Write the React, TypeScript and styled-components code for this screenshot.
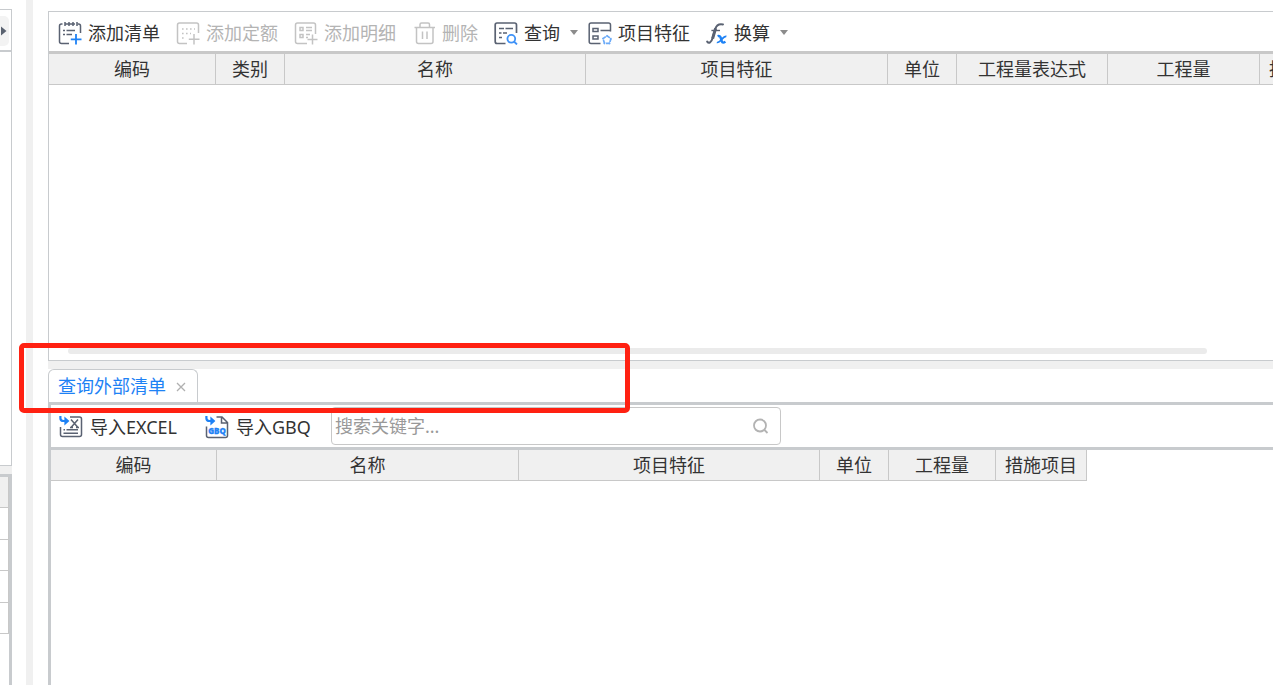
import React from "react";
import styled, { createGlobalStyle, css } from "styled-components";

const line = "#c8cbce";
const soft = "#c8c8c8";
const ink = "#5a6272";
const blue = "#1e82f5";
const muted = "#c3c3c3";

const GlobalStyle = createGlobalStyle`
  *, *::before, *::after { box-sizing: border-box; }
  body {
    margin: 0;
    background: #fff;
    color: #333;
    font-family: "Noto Sans", "Noto Sans CJK SC", sans-serif;
    font-size: 18px;
    line-height: 24px;
  }
  button, input { font: inherit; color: inherit; }
`;

const Page = styled.div`
  display: flex;
  min-height: 100vh;
  overflow: hidden;
`;

/* Left side panel */
const SidePane = styled.aside`
  flex: 0 0 12px;
  display: flex;
  flex-direction: column;
  padding-top: 9px;
`;

const SideTop = styled.section`
  height: 457px;
  border: solid ${line};
  border-width: 1px 1px 1px 0;
`;

const SideTabs = styled.div`
  height: 42px;
  padding-top: 6px;
  border-bottom: 2px solid ${line};
`;

const ScrollButton = styled.button`
  display: flex;
  align-items: center;
  width: 9px;
  height: 30px;
  padding: 0;
  border: 0;
  border-radius: 0 5px 5px 0;
  background: #f3f3f3;
`;

const SideGap = styled.div`
  height: 8px;
  background: #f0f0f0;
`;

const SideBottom = styled.section`
  flex: 1;
  border: solid ${line};
  border-width: 3px 3px 0 0;
`;

const SideRow = styled.div<{ $head?: boolean }>`
  height: 31px;
  border: solid ${soft};
  border-width: 0 1px 1px 0;
  background: ${(p) => (p.$head ? "#f0f0f0" : "transparent")};
  &:nth-child(even) { height: 32px; }
`;

const Splitter = styled.div`
  flex: 0 0 7px;
  margin: 0 15px 0 14px;
  background: #f0f0f0;
`;

/* Main area */
const Main = styled.main`
  flex: 1;
  min-width: 0;
  display: flex;
  flex-direction: column;
  padding-top: 11px;
`;

const UpperPane = styled.section`
  display: flex;
  flex-direction: column;
  height: 350px;
  border: solid ${line};
  border-width: 1px 0 1px 1px;
`;

const Toolbar = styled.div`
  display: flex;
  align-items: center;
  flex: 0 0 42px;
  padding: 0 0 0 9px;
  border-bottom: 3px solid ${soft};
`;

const Tool = styled.button<{ $menu?: boolean }>`
  display: flex;
  align-items: center;
  gap: 6px;
  flex: none;
  margin: 2px ${(p) => (p.$menu ? "10px" : "16px")} 0 0;
  padding: 0;
  border: 0;
  background: none;
  white-space: nowrap;
  &:disabled { color: #b4b4b4; }
  svg { flex: none; }
`;

const Caret = styled.span`
  width: 8px;
  margin-left: 4px;
  border: solid transparent;
  border-width: 5px 4px 0;
  border-top-color: #8c8c8c;
`;

const GridArea = styled.div`
  flex: 1;
  overflow: hidden;
`;

const Grid = styled.table<{ $width: number }>`
  width: ${(p) => p.$width}px;
  table-layout: fixed;
  border-spacing: 0;
`;

const HeadCell = styled.th<{ $width: number }>`
  width: ${(p) => p.$width}px;
  height: 31px;
  padding: 0;
  border: solid ${soft};
  border-width: 0 1px 1px 0;
  background: #f0f0f0;
  font-weight: 400;
  text-align: center;
  white-space: nowrap;
`;

const ScrollTrack = styled.div`
  padding: 0 66px 6px 19px;
`;

const ScrollThumb = styled.div`
  height: 6px;
  border-radius: 3px;
  background: #ebebeb;
`;

const Gap = styled.div`
  height: 8px;
  background: #f0f0f0;
`;

const TabBar = styled.div`
  position: relative;
  display: flex;
  height: 36px;
  border-bottom: 3px solid ${line};
`;

const Tab = styled.div`
  display: flex;
  align-items: center;
  gap: 10px;
  padding: 0 11px 0 9px;
  border: 1px solid ${line};
  border-bottom: 0;
  border-radius: 6px 6px 0 0;
`;

const plain = css`
  padding: 0;
  border: 0;
  background: none;
`;

const TabLabel = styled.button`
  ${plain}
  color: ${blue};
`;

const TabClose = styled.button`
  ${plain}
  display: flex;
  padding-top: 2px;
`;

const Highlight = styled.div`
  position: absolute;
  z-index: 2;
  left: -29px;
  top: -26px;
  width: 611px;
  height: 70px;
  border: 5px solid #ff2112;
  border-radius: 5px;
  pointer-events: none;
`;

const LowerPane = styled.section`
  flex: 1;
  display: flex;
  flex-direction: column;
  border-left: 3px solid ${line};
`;

const ImportBar = styled.div`
  display: flex;
  align-items: center;
  flex: 0 0 45px;
  padding-left: 8px;
  border-bottom: 3px solid ${line};
`;

const ImportTool = styled(Tool)`
  gap: 7px;
  margin: 2px 28px 0 0;
  & + & { margin-right: 20px; }
`;

const SearchBox = styled.label`
  display: flex;
  align-items: center;
  flex: 0 1 450px;
  height: 38px;
  padding: 0 10px 0 3px;
  border: 1px solid ${soft};
  border-radius: 4px;
`;

const SearchInput = styled.input`
  flex: 1;
  min-width: 0;
  padding: 0;
  border: 0;
  outline: 0;
  background: none;
  &::placeholder { color: #999; opacity: 1; }
`;

const Glyph = ({ width = 24, children }: { width?: number; children: React.ReactNode }) => (
  <svg width={width} height="24" viewBox={`0 0 ${width} 24`} fill="none" strokeWidth="1.5" aria-hidden="true">
    {children}
  </svg>
);

const AddListIcon = () => (
  <Glyph>
    <path d="M4.5 3H3.5Q1.5 3 1.5 5V20.5Q1.5 22.5 3.5 22.5H11M19.5 3H20.5Q22.5 3 22.5 5V12" stroke={ink} />
    <path d="M7 1V5M11 1V5M15 1V5M19 1V5M7 3H17" stroke={ink} />
    <path d="M5 9.5H7M8.5 9.5H17M5 13.5H7M8.5 13.5H14" stroke={ink} />
    <path d="M18 13V23.5M12.8 18.3H23.5" stroke={blue} strokeWidth="1.8" />
  </Glyph>
);

const AddQuotaIcon = () => (
  <Glyph>
    <path d="M11 22.5H3.5Q1.5 22.5 1.5 20.5V4Q1.5 2 3.5 2H20.5Q22.5 2 22.5 4V12" stroke={muted} />
    <path d="M6 8H19M6 12.5H15M6 17H10" stroke={muted} strokeDasharray="1.6 2.4" />
    <path d="M18 13V23.5M12.8 18.3H23.5" stroke={muted} />
  </Glyph>
);

const AddDetailIcon = () => (
  <Glyph>
    <path d="M13 22.5H3.5Q1.5 22.5 1.5 20.5V4Q1.5 2 3.5 2H19.5Q21.5 2 21.5 4V13" stroke={muted} />
    <path d="M6 6.5H9V9.5H6ZM6 13.5H9V16.5H6ZM12 6.5H18M12 9.5H18M12 13.5H16M12 16.5H14" stroke={muted} />
    <path d="M18.5 13.5V23.5M13.5 18.5H23.5" stroke={muted} />
  </Glyph>
);

const TrashIcon = () => (
  <Glyph>
    <path d="M2.5 6.5H23M8 6V3.5Q8 2 9.5 2H16Q17.5 2 17.5 3.5V6M4.5 6.5V20.5Q4.5 22.5 6.5 22.5H19Q21 22.5 21 20.5V6.5M10.5 10.5V18M15 10.5V18" stroke={muted} />
  </Glyph>
);

const QueryIcon = () => (
  <Glyph>
    <path d="M11.5 22.5H3Q1.2 22.5 1.2 20.5V4Q1.2 2 3 2H20.5Q22.5 2 22.5 4V12" stroke={ink} strokeWidth="1.7" />
    <path d="M5 7.5H10M11.5 7.5H19M5 12H7.5M9 12H13M5 16.5H8" stroke={ink} />
    <circle cx="17.3" cy="17.8" r="3.9" stroke="#3f92f7" strokeWidth="1.8" />
    <path d="M20 20.5L23 23.5" stroke="#3f92f7" strokeWidth="1.8" />
  </Glyph>
);

const FeatureIcon = () => (
  <Glyph>
    <path d="M12.5 22.5H3Q1.2 22.5 1.2 20.5V4Q1.2 2 3 2H20.5Q22.5 2 22.5 4V10.5" stroke={ink} />
    <path d="M5 7.5H10V10.5H5ZM5 15H10V18H5ZM12.5 9.5H22.5" stroke={ink} />
    <path d="M19 14.8L23 17.6L21.5 22.3H16.5L15 17.6Z" stroke="#6cabf8" strokeWidth="1.7" strokeDasharray="3.6 1.3" />
    <path d="M19 14V16M23.6 17.5L22 18M22 23L21 21.5M16 23L17 21.5M14.4 17.5L16 18" stroke="#6cabf8" strokeWidth="1.4" />
  </Glyph>
);

const FormulaIcon = () => (
  <Glyph width={22}>
    <path d="M1.2 20.6C2.8 23 5.4 21.6 6.6 17L9.4 7.6C10.6 3.8 13.2 2.6 17 3.4" stroke={ink} strokeWidth="2" strokeLinecap="round" />
    <path d="M6.6 17.6L9.6 7.4" stroke={ink} strokeWidth="3" />
    <path d="M5.4 9.5H14" stroke={ink} strokeWidth="1.4" />
    <path d="M11.6 15.2Q14.2 14.2 14.8 17.2L15.8 20.4Q16.6 22.8 19.4 20.6" stroke={blue} strokeWidth="2.4" />
    <path d="M20.4 15.4C17 14.6 14.2 22.4 10.8 21.4" stroke={blue} strokeWidth="1.6" />
  </Glyph>
);

const ImportArrow = () => (
  <>
    <path d="M1.4 1V3.2Q1.4 6 4.6 6H7" stroke={blue} strokeWidth="2.2" />
    <path d="M5.4 1.6L10.4 6L5.4 10.4Z" fill={blue} />
  </>
);

const ExcelIcon = () => (
  <Glyph>
    <ImportArrow />
    <path d="M11 2H20.5Q22.5 2 22.5 4V19.5Q22.5 21.5 20.5 21.5H3.5Q1.5 21.5 1.5 19.5V12" stroke={ink} />
    <path d="M12 4.5L19 12.5M19 4.5L12 12.5M11 12.5H14M17 12.5H20" stroke={ink} />
    <path d="M4.5 14.8H6M7.5 14.8H19M4.5 18.3H19" stroke={ink} />
  </Glyph>
);

const GbqIcon = () => (
  <Glyph>
    <ImportArrow />
    <path d="M11.5 2H17L22.5 7.5V20.5Q22.5 22.5 20.5 22.5H3.5Q1.5 22.5 1.5 20.5V11.5M16.5 2V8H22.5" stroke={ink} />
    <text x="12" y="19" textAnchor="middle" fill={blue} stroke={blue} strokeWidth="0.3" fontFamily="Open Sans, sans-serif" fontSize="8" fontWeight="800">
      GBQ
    </text>
  </Glyph>
);

type Column = [name: string, width: number];

const upperColumns: Column[] = [
  ["编码", 167],
  ["类别", 69],
  ["名称", 301],
  ["项目特征", 302],
  ["单位", 69],
  ["工程量表达式", 151],
  ["工程量", 152],
  ["措施项目", 91],
];

const lowerColumns: Column[] = [
  ["编码", 166],
  ["名称", 302],
  ["项目特征", 301],
  ["单位", 69],
  ["工程量", 107],
  ["措施项目", 91],
];

const DataGrid = ({ columns }: { columns: Column[] }) => (
  <Grid $width={columns.reduce((sum, [, w]) => sum + w, 0)}>
    <thead>
      <tr>
        {columns.map(([name, width]) => (
          <HeadCell key={name} $width={width} scope="col">
            {name}
          </HeadCell>
        ))}
      </tr>
    </thead>
  </Grid>
);

export default function App() {
  return (
    <>
      <GlobalStyle />
      <Page>
        <SidePane>
          <SideTop>
            <SideTabs>
              <ScrollButton aria-label="展开">
                <svg width="7" height="10" viewBox="0 0 7 10" aria-hidden="true">
                  <path d="M1 0.5L6.5 5L1 9.5Z" fill="#5a6270" />
                </svg>
              </ScrollButton>
            </SideTabs>
          </SideTop>
          <SideGap />
          <SideBottom>
            <SideRow $head />
            <SideRow />
            <SideRow />
            <SideRow />
            <SideRow />
          </SideBottom>
        </SidePane>
        <Splitter />
        <Main>
          <UpperPane>
            <Toolbar>
              <Tool><AddListIcon />添加清单</Tool>
              <Tool disabled><AddQuotaIcon />添加定额</Tool>
              <Tool disabled><AddDetailIcon />添加明细</Tool>
              <Tool disabled><TrashIcon />删除</Tool>
              <Tool $menu><QueryIcon />查询<Caret /></Tool>
              <Tool><FeatureIcon />项目特征</Tool>
              <Tool $menu><FormulaIcon />换算<Caret /></Tool>
            </Toolbar>
            <GridArea>
              <DataGrid columns={upperColumns} />
            </GridArea>
            <ScrollTrack>
              <ScrollThumb />
            </ScrollTrack>
          </UpperPane>
          <Gap />
          <TabBar>
            <Tab>
              <TabLabel>查询外部清单</TabLabel>
              <TabClose aria-label="关闭">
                <svg width="10" height="10" viewBox="0 0 10 10" aria-hidden="true">
                  <path d="M1 1L9 9M9 1L1 9" stroke="#b0b0b0" strokeWidth="1.3" />
                </svg>
              </TabClose>
            </Tab>
            <Highlight />
          </TabBar>
          <LowerPane>
            <ImportBar>
              <ImportTool><ExcelIcon />导入EXCEL</ImportTool>
              <ImportTool><GbqIcon />导入GBQ</ImportTool>
              <SearchBox>
                <SearchInput type="text" placeholder="搜索关键字..." aria-label="搜索关键字" />
                <svg width="18" height="18" viewBox="0 0 18 18" fill="none" stroke="#b3b3b3" strokeWidth="1.8" aria-hidden="true">
                  <circle cx="8" cy="8.5" r="6" />
                  <path d="M12 12.5L15.5 16" />
                </svg>
              </SearchBox>
            </ImportBar>
            <GridArea>
              <DataGrid columns={lowerColumns} />
            </GridArea>
          </LowerPane>
        </Main>
      </Page>
    </>
  );
}
